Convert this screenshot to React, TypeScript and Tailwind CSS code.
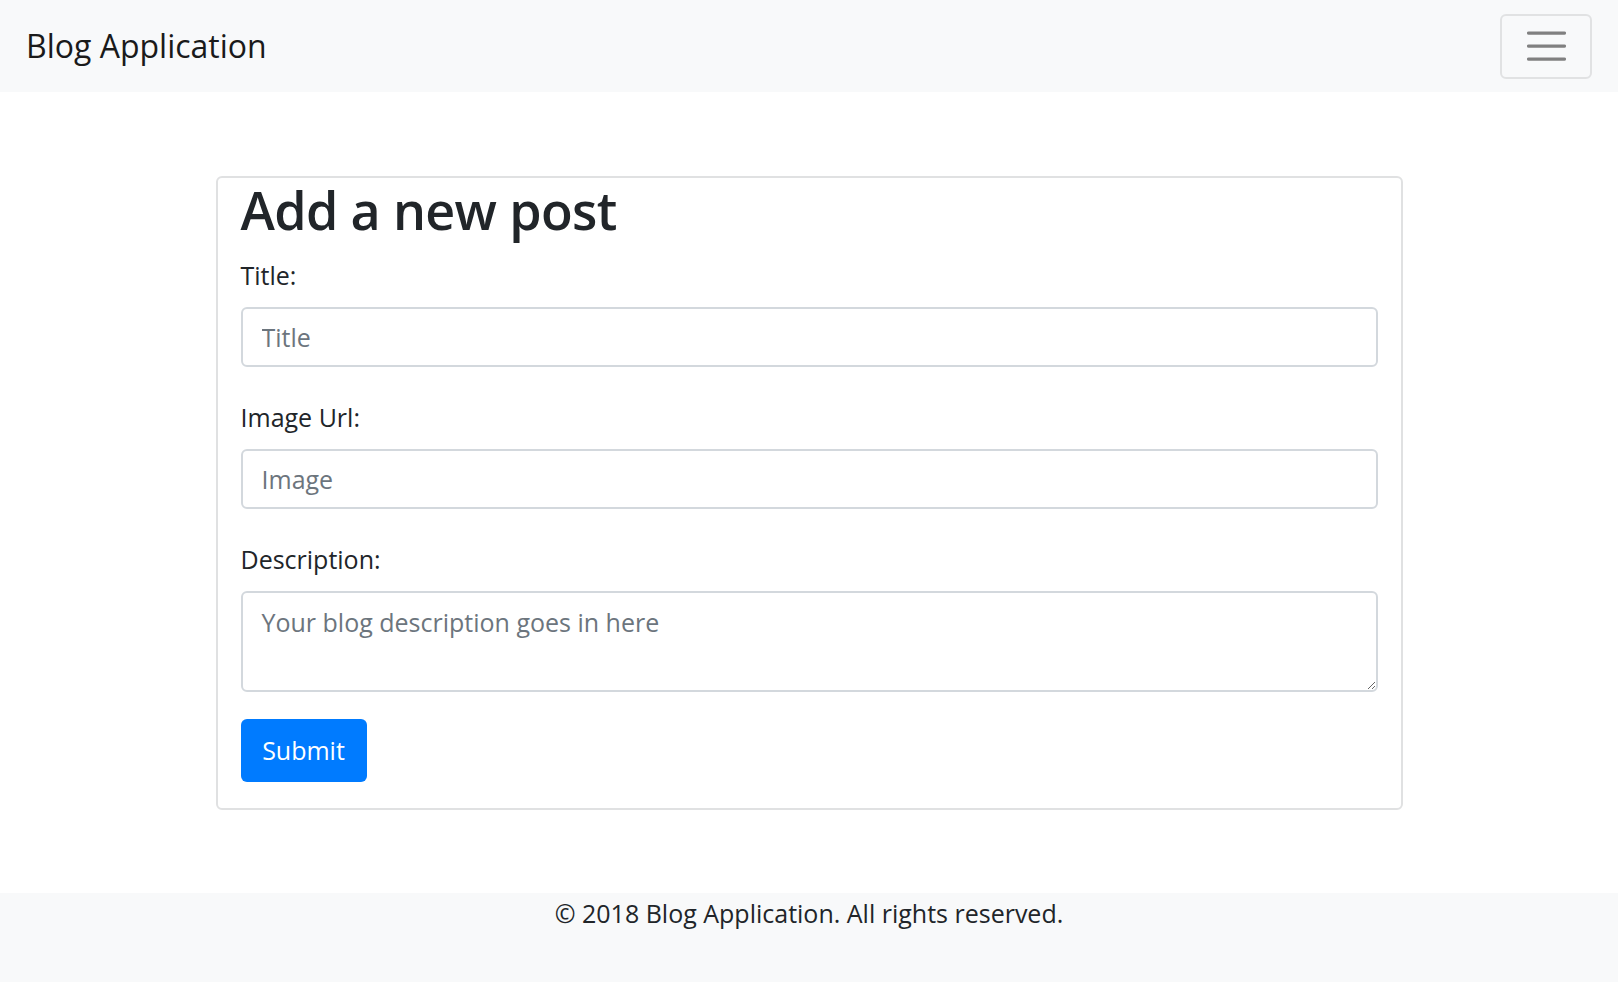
import React from "react";

const font = { fontFamily: '"Open Sans", "Noto Sans", sans-serif' };

function Navbar() {
  return (
    <nav className="flex h-[92px] items-center justify-between bg-[#f8f9fa] px-[26px]">
      <a href="#" className="text-[32px] leading-[48px] text-[#1a1a1a]">
        Blog Application
      </a>
      <button
        type="button"
        className="flex h-[65px] w-[92px] items-center justify-center rounded-[6px] border-2 border-[#e1e2e3]"
        aria-label="Toggle navigation"
      >
        <svg width="39" height="30" viewBox="0 0 39 30" fill="none">
          <path
            d="M1.6 2h35.8M1.6 15h35.8M1.6 28h35.8"
            stroke="#808080"
            strokeWidth="3.25"
            strokeLinecap="round"
          />
        </svg>
      </button>
    </nav>
  );
}

function Field({ label, placeholder }: { label: string; placeholder: string }) {
  return (
    <div className="mb-[29px]">
      <label className="mb-[13px] block pt-[2px] text-[25px] leading-[38px] text-[#212529]">{label}</label>
      <input
        type="text"
        placeholder={placeholder}
        className="block h-[60px] w-full rounded-[6px] border-2 border-[#d3d8dd] px-[19px] text-[25px] text-[#495057] outline-none placeholder:text-[#6c757d]"
      />
    </div>
  );
}

export default function App() {
  return (
    <div className="flex min-h-[982px] flex-col bg-white" style={font}>
      <Navbar />
      <main className="flex-1 pt-[84px] pb-[83px]">
        <div className="mx-auto w-[1187px] rounded-[6px] border-2 border-[#e0e1e2] px-[23px] pt-[1px] pb-[26px]">
          <h2 className="mb-[13px] text-[52px] font-semibold leading-[62px] tracking-[-0.65px] text-[#212529]">
            Add a new post
          </h2>
          <form onSubmit={(e) => e.preventDefault()}>
            <Field label="Title:" placeholder="Title" />
            <Field label="Image Url:" placeholder="Image" />
            <div className="mb-[27px]">
              <label className="mb-[13px] block pt-[2px] text-[25px] leading-[38px] text-[#212529]">
                Description:
              </label>
              <textarea
                placeholder="Your blog description goes in here"
                className="block h-[101px] w-full rounded-[6px] border-2 border-[#d3d8dd] px-[19px] pt-[11px] pb-[6px] text-[25px] leading-[37.5px] text-[#495057] outline-none placeholder:text-[#6c757d]"
              />
            </div>
            <button
              type="submit"
              className="flex h-[63px] w-[126px] items-center justify-center rounded-[6px] bg-[#007bff] text-[25px] text-white"
            >
              Submit
            </button>
          </form>
        </div>
      </main>
      <footer className="h-[90px] bg-[#f8f9fa] pt-[1px] text-center text-[25px] leading-[38px] text-[#212529]">
        © 2018 Blog Application. All rights reserved.
      </footer>
    </div>
  );
}
